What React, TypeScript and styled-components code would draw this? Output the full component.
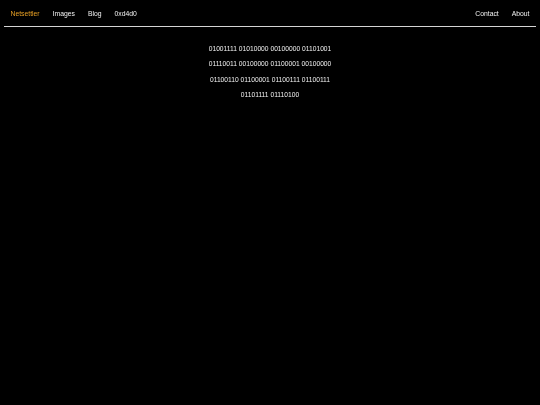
import React from "react";
import styled, { createGlobalStyle } from "styled-components";

const GlobalStyle = createGlobalStyle`
  html, body {
    margin: 0;
    padding: 0;
    background: #000;
  }
  body {
    font-family: "Liberation Sans", Arial, sans-serif;
    color: #f2f2f2;
    -webkit-font-smoothing: antialiased;
  }
`;

const Page = styled.div`
  min-height: 405px;
  background: #000;
  will-change: transform;
`;

const Nav = styled.nav`
  display: flex;
  justify-content: space-between;
  align-items: center;
  height: 26px;
  margin: 0 4px;
  border-bottom: 1px solid #d4d4d4;
`;

const NavGroup = styled.div`
  display: flex;
  align-items: center;
  padding-top: 1px;
`;

const NavLink = styled.a<{ $brand?: boolean }>`
  font-size: 6.8px;
  line-height: 25px;
  padding: 0 6.5px;
  color: ${(p) => (p.$brand ? "#e8a024" : "#f2f2f2")};
  text-decoration: none;
  cursor: pointer;
`;

const Main = styled.main`
  display: flex;
  justify-content: center;
  padding-top: 14px;
`;

const Binary = styled.p`
  margin: 0;
  width: 140px;
  text-align: center;
  font-size: 6.7px;
  line-height: 15.3px;
  color: #f2f2f2;
`;

const message =
  "01001111 01010000 00100000 01101001 01110011 00100000 01100001 00100000 01100110 01100001 01100111 01100111 01101111 01110100";

export default function App() {
  return (
    <Page>
      <GlobalStyle />
      <Nav>
        <NavGroup>
          <NavLink $brand>Netsettler</NavLink>
          <NavLink>Images</NavLink>
          <NavLink>Blog</NavLink>
          <NavLink>0xd4d0</NavLink>
        </NavGroup>
        <NavGroup>
          <NavLink>Contact</NavLink>
          <NavLink>About</NavLink>
        </NavGroup>
      </Nav>
      <Main>
        <Binary>{message}</Binary>
      </Main>
    </Page>
  );
}
